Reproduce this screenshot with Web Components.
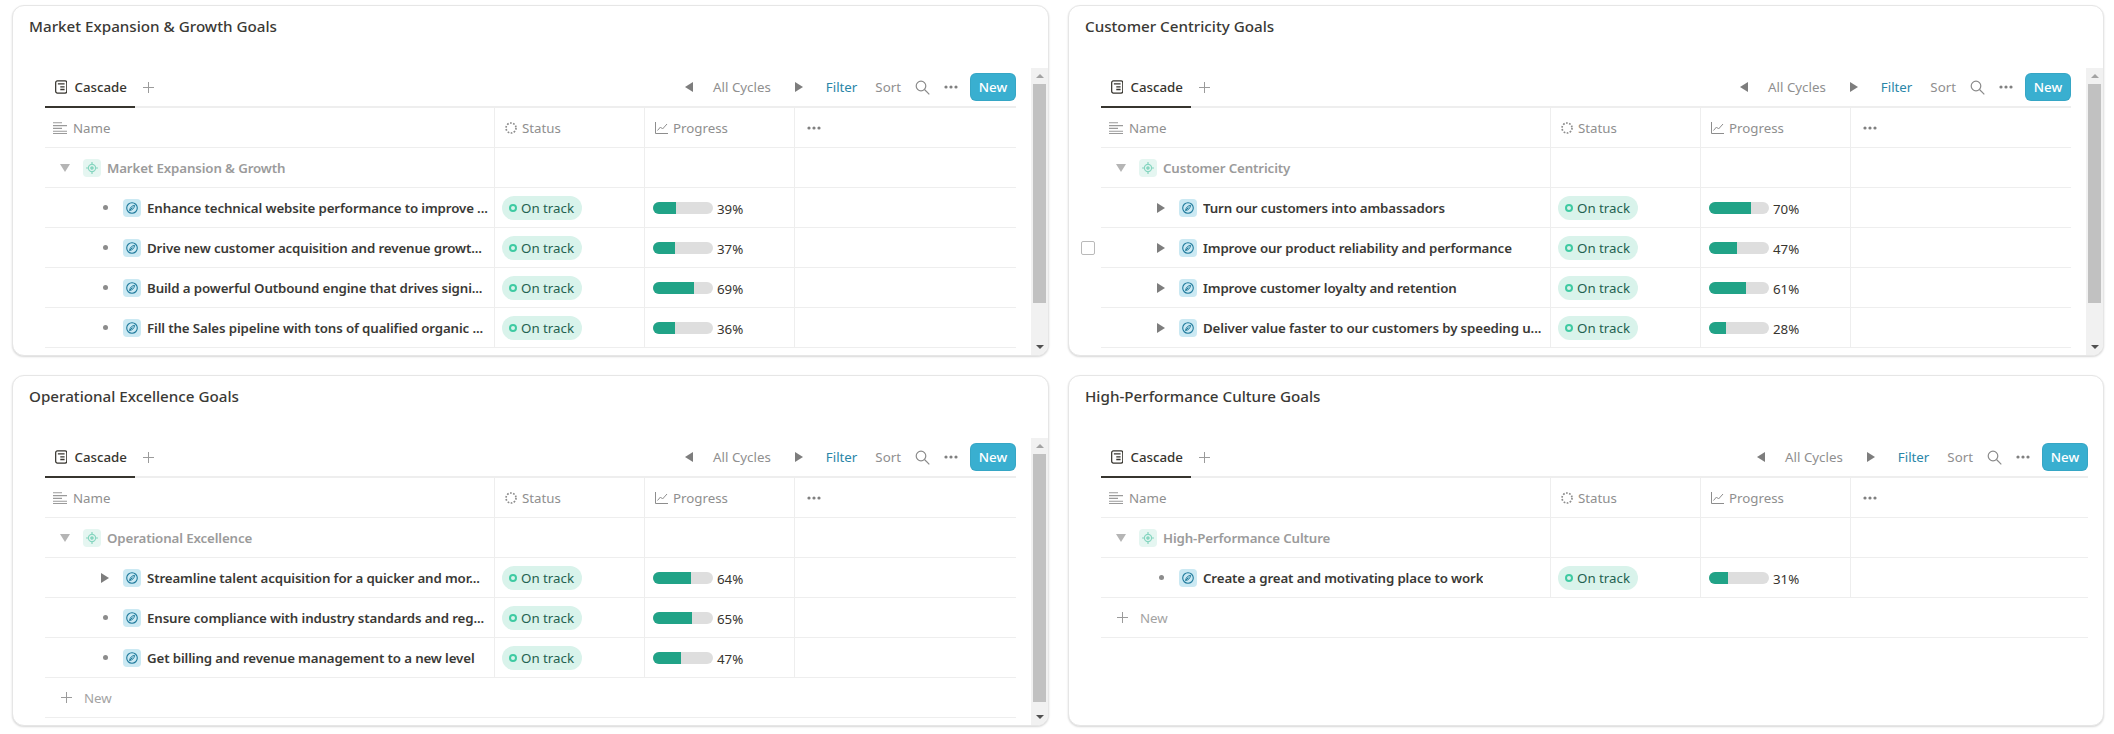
<!DOCTYPE html>
<html lang="en"><head><meta charset="utf-8"><title>Goals</title>
<style>
html,body{margin:0;padding:0;background:#fff;font-family:"Noto Sans","Liberation Sans",sans-serif;color:#37352f}
</style></head><body>
<goal-board>
  <goal-card heading="Market Expansion &amp; Growth Goals" scroll="16,219">
    <cascade-table>
      <goal-group>Market Expansion &amp; Growth</goal-group>
      <goal-row pct="39">Enhance technical website performance to improve ...</goal-row>
      <goal-row pct="37">Drive new customer acquisition and revenue growt...</goal-row>
      <goal-row pct="69">Build a powerful Outbound engine that drives signi...</goal-row>
      <goal-row pct="36">Fill the Sales pipeline with tons of qualified organic ...</goal-row>
    </cascade-table>
  </goal-card>
  <goal-card heading="Customer Centricity Goals" scroll="16,219">
    <cascade-table>
      <goal-group>Customer Centricity</goal-group>
      <goal-row pct="70" expand>Turn our customers into ambassadors</goal-row>
      <goal-row pct="47" expand check>Improve our product reliability and performance</goal-row>
      <goal-row pct="61" expand>Improve customer loyalty and retention</goal-row>
      <goal-row pct="28" expand>Deliver value faster to our customers by speeding u...</goal-row>
    </cascade-table>
  </goal-card>
  <goal-card heading="Operational Excellence Goals" scroll="16,248">
    <cascade-table>
      <goal-group>Operational Excellence</goal-group>
      <goal-row pct="64" expand>Streamline talent acquisition for a quicker and mor...</goal-row>
      <goal-row pct="65">Ensure compliance with industry standards and reg...</goal-row>
      <goal-row pct="47">Get billing and revenue management to a new level</goal-row>
      <add-row></add-row>
    </cascade-table>
  </goal-card>
  <goal-card heading="High-Performance Culture Goals">
    <cascade-table>
      <goal-group>High-Performance Culture</goal-group>
      <goal-row pct="31">Create a great and motivating place to work</goal-row>
      <add-row></add-row>
    </cascade-table>
  </goal-card>
</goal-board>
<script>
const COLS='450px 150px 150px 1fr';
function def(name,html){
  customElements.define(name,class extends HTMLElement{
    connectedCallback(){
      if(this.shadowRoot)return;
      this.attachShadow({mode:'open'}).innerHTML=typeof html==='function'?html(this):html;
    }
  });
}
const I={
 tab:'<svg width="13" height="14" viewBox="0 0 13 14" fill="none" stroke="#37352f"><rect x=".7" y=".7" width="11.6" height="12.6" rx="1.8" stroke-width="1.3"/><path d="M3 3.8h7M5.5 6.8h4.5M5.5 9.6h4.5" stroke-width="1.4"/></svg>',
 plus:'<svg width="11" height="11" viewBox="0 0 11 11" stroke="#9b9b9b" stroke-width="1"><path d="M5.5 0v11M0 5.5h11"/></svg>',
 left:'<svg width="8" height="10" viewBox="0 0 8 10" fill="#7d7d7d"><path d="M8 0v10L0 5z"/></svg>',
 right:'<svg width="8" height="10" viewBox="0 0 8 10" fill="#7d7d7d"><path d="M0 0v10l8-5z"/></svg>',
 search:'<svg width="15" height="15" viewBox="0 0 15 15" fill="none" stroke="#8a8a8a" stroke-width="1.2"><circle cx="6" cy="6" r="4.8"/><path d="M9.5 9.5 14.3 14.3"/></svg>',
 dots:'<svg width="14" height="4" viewBox="0 0 14 4" fill="#808080"><circle cx="2" cy="2" r="1.6"/><circle cx="7" cy="2" r="1.6"/><circle cx="12" cy="2" r="1.6"/></svg>',
 name:'<svg width="14" height="12" viewBox="0 0 14 12" stroke="#9a9a9a" stroke-width="1.1"><path d="M0 .8h9M0 3.6h14M0 6.4h9M0 9.2h14M0 11.5h14"/></svg>',
 status:'<svg width="12" height="12" viewBox="0 0 12 12" fill="none" stroke="#8d8d8d" stroke-width="1.7" stroke-dasharray="1.7 1.44"><circle cx="6" cy="6" r="5"/></svg>',
 chart:'<svg width="13" height="12" viewBox="0 0 13 12" fill="none" stroke="#8d8d8d" stroke-width="1"><path d="M.5 0v11.5H13"/><path d="M2.5 8.5 5.5 5l2 2 4.5-5"/></svg>',
 target:'<svg width="12" height="12" viewBox="0 0 12 12" fill="none" stroke="#86d6c0" stroke-width="1.2"><circle cx="6" cy="6" r="3.6"/><circle cx="6" cy="6" r="1.2" fill="#86d6c0"/><path d="M6 0v2M6 10v2M0 6h2M10 6h2"/></svg>',
 goal:'<svg width="12" height="12" viewBox="0 0 12 12" fill="none" stroke="#1f7a9c" stroke-width="1.1"><circle cx="6" cy="6" r="5.3"/><path d="M8.6 3.4C6 3.6 4 5.4 3.6 8.4 6.2 8.4 8.2 6.2 8.6 3.4ZM3.6 8.4 6.4 5.6" stroke-width="1"/></svg>'
};
def('goal-board',`<style>:host{display:grid;grid-template-columns:1037px 1036px;grid-template-rows:351px 351px;column-gap:19px;row-gap:19px;padding:5px 10px 8px 12px;box-sizing:border-box;width:2114px;height:734px}</style><slot></slot>`);
def('goal-card',h=>{
  const s=h.getAttribute('scroll');
  let bar='';
  if(s){const [t,ht]=s.split(',');bar=`<scroll-track top="${t}" size="${ht}"></scroll-track>`;}
  return `<style>
  :host{display:flex;flex-direction:column;box-sizing:border-box;border:1px solid #e6e6e6;border-radius:12px;background:#fff;box-shadow:0 1px 2px rgba(0,0,0,.16);min-width:0;min-height:0;overflow:hidden}
  h2{margin:0;height:62px;box-sizing:border-box;padding:9px 0 0 16px;font-size:15.2px;line-height:22px;font-weight:500;color:#3a3935}
  .body{flex:1;display:flex;min-height:0}
  .pane{flex:1;min-width:0;padding:0 15px 0 32px;overflow:hidden}
  </style><h2>${h.getAttribute('heading').replace(/&/g,'&amp;')}</h2><div class="body"><div class="pane"><slot></slot></div>${bar}</div>`;
});
def('scroll-track',h=>`<style>
  :host{flex:none;width:17px;background:#f1f1f1;display:flex;flex-direction:column;align-items:center;position:relative}
  .thumb{width:13px;background:#c1c1c1;margin-top:${h.getAttribute('top')}px;height:${h.getAttribute('size')}px}
  .a{width:0;height:0;border-left:4px solid transparent;border-right:4px solid transparent;position:absolute}
  .u{top:6px;border-bottom:4px solid #a3a3a3}
  .d{bottom:6px;border-top:4px solid #505050}
  </style><i class="a u"></i><div class="thumb"></div><i class="a d"></i>`);
def('cascade-table',`<style>:host{display:block;--cols:${COLS};font-size:13.3px}
  .bar{display:flex;align-items:center;height:40px;border-bottom:2px solid #eeeeee;box-sizing:border-box;position:relative;color:#8f8f8f}
  .tab{display:flex;align-items:center;gap:7px;height:40px;padding:0 8px 0 10px;box-sizing:border-box;border-bottom:2px solid #37352f;color:#37352f;font-weight:500;margin-bottom:-2px;width:90px}
  .plus{margin-left:8px;display:flex}
  .sp{flex:1}
  .tools{display:flex;align-items:center;height:28px}
  .tools>*{flex:none}
  .cy{margin:0 24px 0 20px}
  .fl{color:#2a86a8;margin:0 0 0 23px}
  .so{margin:0 0 0 18px}
  .se{margin:0 0 0 14px;display:flex}
  .do{margin:0 0 0 14px;display:flex}
  .new{margin:0 0 0 12px;width:46px;height:28px;border-radius:6px;background:#39afd0;color:#fff;font-weight:500;display:flex;align-items:center;justify-content:center;box-shadow:inset 0 0 0 1px rgba(0,0,0,.05)}
  .head{display:grid;grid-template-columns:var(--cols);height:40px;border-bottom:1px solid #eeeeee;color:#8f8f8f;box-sizing:border-box}
  .head>div{display:flex;align-items:center;gap:5px;padding-left:10px;border-right:1px solid #eeeeee;min-width:0}
  .head>div:last-child{border:0;padding-left:12px}
  .head>div:first-child{padding-left:8px;gap:6px}
  </style>
  <div class="bar"><div class="tab">${I.tab}<span>Cascade</span></div><span class="plus">${I.plus}</span><span class="sp"></span>
    <div class="tools"><span style="display:flex">${I.left}</span><span class="cy">All Cycles</span><span style="display:flex">${I.right}</span><span class="fl">Filter</span><span class="so">Sort</span><span class="se">${I.search}</span><span class="do">${I.dots}</span><span class="new">New</span></div></div>
  <div class="head"><div>${I.name}<span>Name</span></div><div>${I.status}<span>Status</span></div><div>${I.chart}<span>Progress</span></div><div>${I.dots}</div></div>
  <slot></slot>`);
const rowCss=`:host{display:grid;grid-template-columns:${COLS};height:40px;border-bottom:1px solid #eeeeee;box-sizing:border-box;position:relative;align-items:stretch}
  .c{border-right:1px solid #eeeeee;display:flex;align-items:center;min-width:0}
  .c:last-child{border:0}
  .tile{width:18px;height:18px;border-radius:4px;display:flex;align-items:center;justify-content:center;flex:none}`;
def('goal-group',`<style>${rowCss}
  .n{padding-left:15px;color:#9b9b9b;font-weight:600;letter-spacing:-.13px}
  .tri{width:0;height:0;border-left:5px solid transparent;border-right:5px solid transparent;border-top:8px solid #b5b5b5;margin-right:13px}
  .tile{background:#e5f6f1;margin-right:6px}
  </style><div class="c n"><i class="tri"></i><span class="tile">${I.target}</span><slot></slot></div><div class="c"></div><div class="c"></div><div class="c"></div>`);
def('goal-row',h=>{
  const p=h.getAttribute('pct');
  const ex=h.hasAttribute('expand');
  return `<style>${rowCss}
  .n{padding-left:${ex?56:58}px;font-weight:600;letter-spacing:-.13px;color:#3a3935}
  .tb{width:${ex?22:20}px;flex:none;display:flex}
  .bul{width:5px;height:5px;border-radius:50%;background:#8c8c8c}
  .tile{background:#cbe9f3;margin-right:6px}
  .txt{white-space:nowrap;overflow:hidden}
  .pill{display:flex;align-items:center;height:24px;width:80px;box-sizing:border-box;margin-left:7px;padding-left:7px;border-radius:12px;background:#d9f3eb;color:#1f6250;font-weight:400;gap:4px}
  .pill i{border:2px solid #3fcaa2;border-radius:50%;box-sizing:content-box;flex:none;width:4px;height:4px}
  .bar{width:60px;height:12px;border-radius:6px;background:#dedede;overflow:hidden;margin-left:8px;flex:none}
  .bar b{display:block;height:100%;background:#21a387;width:${p}%}
  .pc{margin-left:4px;font-size:13.3px;padding-top:2px;color:#37352f}
  .cb{position:absolute;left:-20px;top:13px;width:14px;height:14px;box-sizing:border-box;border:1px solid #b9b9b9;border-radius:2px;background:#fff}
  </style>${h.hasAttribute('check')?'<i class="cb"></i>':''}
  <div class="c n"><span class="tb">${ex?I.right:'<i class="bul"></i>'}</span><span class="tile">${I.goal}</span><span class="txt"><slot></slot></span></div>
  <div class="c"><span class="pill"><i></i><span>On track</span></span></div>
  <div class="c"><span class="bar"><b></b></span><span class="pc">${p}%</span></div><div class="c"></div>`;
});
def('add-row',`<style>:host{display:flex;align-items:center;height:40px;border-bottom:1px solid #eeeeee;box-sizing:border-box;color:#a3a3a3;padding-left:16px;gap:12px}</style>${I.plus}<span>New</span>`);
</script>
</body></html>
